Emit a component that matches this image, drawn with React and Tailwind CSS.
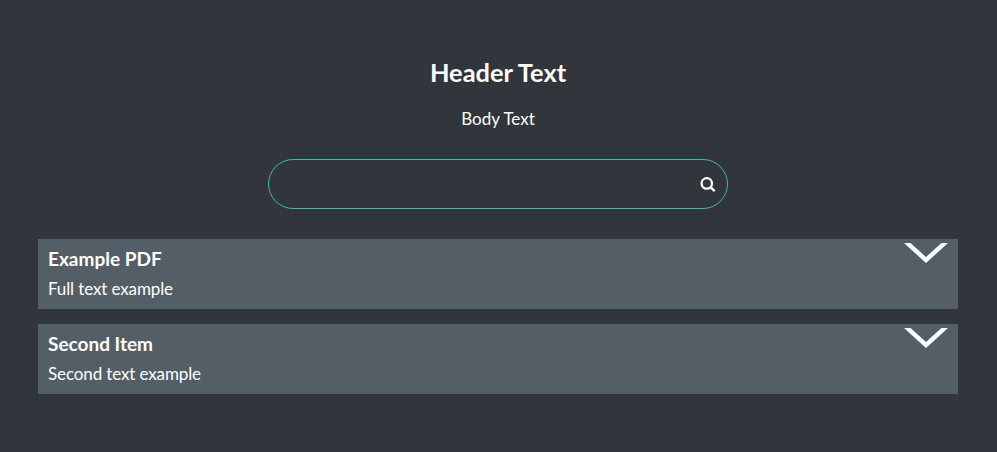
const items = [
  { title: "Example PDF", text: "Full text example" },
  { title: "Second Item", text: "Second text example" },
];

function Row({ title, text }) {
  return (
    <article className="flex h-[70px] items-start justify-between bg-[#545e67] px-[10px]">
      <div className="pt-[5px]">
        <h2 className="text-[19px] font-bold leading-[30px]">{title}</h2>
        <p className="text-[17px] leading-[30px] tracking-[-0.12px]">{text}</p>
      </div>
      <svg className="mt-1 h-5 w-11" viewBox="0 0 44 20" fill="white">
        <path d="M0 0H6.5L22 14L37.5 0H44L22 20Z" />
      </svg>
    </article>
  );
}

export default function App() {
  return (
    <main className="h-[452px] overflow-hidden bg-[#31353c] pl-[38px] pr-[39px] font-['Lato',sans-serif] text-white">
      <header className="flex flex-col items-center pt-[53px]">
        <h1 className="text-[25.4px] font-bold leading-[38px]">Header Text</h1>
        <p className="mt-[13px] text-[17px] leading-[30px]">Body Text</p>
        <label className="mt-[25px] flex h-[50px] w-[460px] items-center rounded-full border border-[#3fbf9b] pl-5 pr-[11px]">
          <input className="min-w-0 flex-1 bg-transparent outline-none" />
          <svg className="h-4 w-4" viewBox="0 0 16 16" fill="none" stroke="white">
            <circle cx="6.8" cy="7.4" r="5.2" strokeWidth="2.3" />
            <path d="M10.6 11.2L14.7 15.2" strokeWidth="2.4" />
          </svg>
        </label>
      </header>
      <section className="mt-[30px] flex flex-col gap-[15px]">
        {items.map((item) => <Row key={item.title} {...item} />)}
      </section>
    </main>
  );
}
